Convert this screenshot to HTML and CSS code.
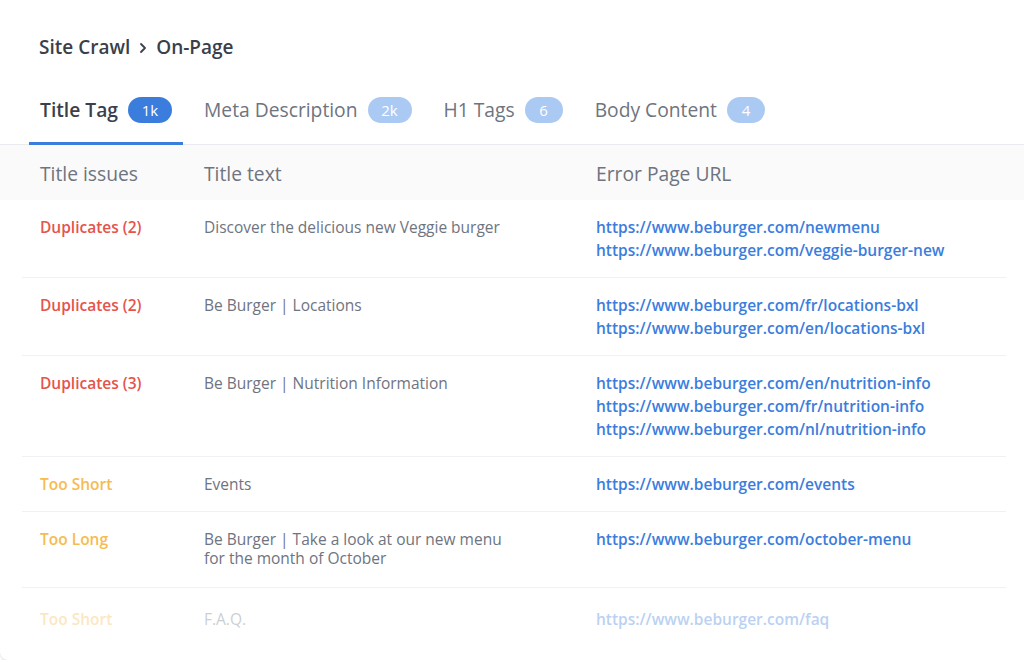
FILE: index.html
```html
<!DOCTYPE html>
<html lang="en">

<head>
  <meta charset="UTF-8" />
  <meta name="viewport" content="width=device-width, initial-scale=1.0" />
  <title>Site Crawl - On-Page</title>
  <link rel="stylesheet" href="styles.css">
</head>

<body>

  <div class="card">
    <div class="crumbs">
      <span>Site Crawl</span>
      <svg class="chevron" width="10" height="12" viewBox="0 0 10 12">
        <path d="M3 2l4 4-4 4" fill="none" stroke="#3a3f4b" stroke-width="1.8" stroke-linecap="round" stroke-linejoin="round" />
      </svg>
      <span>On-Page</span>
    </div>

    <nav class="tabs">
      <a class="tab active" href="#">Title Tag <span class="badge">1k</span></a>
      <a class="tab" href="#">Meta Description <span class="badge">2k</span></a>
      <a class="tab" href="#">H1 Tags <span class="badge sm">6</span></a>
      <a class="tab" href="#">Body Content <span class="badge sm">4</span></a>
    </nav>

    <div class="table">
      <div class="head">
        <div class="row">
          <div>Title issues</div>
          <div>Title text</div>
          <div>Error Page URL</div>
        </div>
      </div>

      <div class="row">
        <div class="issue dup">Duplicates (2)</div>
        <div class="text">Discover the delicious new Veggie burger</div>
        <div class="urls">
          <a href="#">https://www.beburger.com/newmenu</a>
          <a href="#">https://www.beburger.com/veggie-burger-new</a>
        </div>
      </div>

      <div class="row">
        <div class="issue dup">Duplicates (2)</div>
        <div class="text">Be Burger | Locations</div>
        <div class="urls">
          <a href="#">https://www.beburger.com/fr/locations-bxl</a>
          <a href="#">https://www.beburger.com/en/locations-bxl</a>
        </div>
      </div>

      <div class="row">
        <div class="issue dup">Duplicates (3)</div>
        <div class="text">Be Burger | Nutrition Information</div>
        <div class="urls">
          <a href="#">https://www.beburger.com/en/nutrition-info</a>
          <a href="#">https://www.beburger.com/fr/nutrition-info</a>
          <a href="#">https://www.beburger.com/nl/nutrition-info</a>
        </div>
      </div>

      <div class="row">
        <div class="issue warn">Too Short</div>
        <div class="text">Events</div>
        <div class="urls">
          <a href="#">https://www.beburger.com/events</a>
        </div>
      </div>

      <div class="row tall">
        <div class="issue warn">Too Long</div>
        <div class="text wrap">Be Burger | Take a look at our new menu for the month of October</div>
        <div class="urls">
          <a href="#">https://www.beburger.com/october-menu</a>
        </div>
      </div>

      <div class="row faded">
        <div class="issue warn">Too Short</div>
        <div class="text">F.A.Q.</div>
        <div class="urls">
          <a href="#">https://www.beburger.com/faq</a>
        </div>
      </div>
    </div>
  </div>

</body>

</html>
```

FILE: styles.css
```css
body {
  margin: 0;
  padding: 0;
  background: #ffffff;
  font-family: "Open Sans", "Noto Sans", Arial, sans-serif;
  overflow: hidden;
}

.card {
  width: 1060px;
  height: 660px;
  background: #ffffff;
  border-radius: 0 0 0 8px;
  box-shadow: 0 1px 2px rgba(0, 0, 0, 0.14);
  overflow: hidden;
}

/* breadcrumb */
.crumbs {
  display: flex;
  align-items: center;
  gap: 8px;
  padding: 34px 0 0 39px;
  line-height: 26px;
  font-size: 19px;
  font-weight: 600;
  color: #3a3f4b;
}

.chevron {
  margin-top: 1px;
}

/* tabs */
.tabs {
  display: flex;
  gap: 10px;
  margin-top: 37px;
  padding-left: 29px;
  border-bottom: 1px solid #e9ebee;
}

.tab {
  display: flex;
  align-items: center;
  gap: 10px;
  padding: 0 11px 19px;
  margin-bottom: -1px;
  line-height: 26px;
  font-size: 19.25px;
  color: #6e7480;
  text-decoration: none;
  border-bottom: 3px solid transparent;
}

.tab.active {
  color: #3a3f4b;
  font-weight: 600;
  border-bottom-color: #3b7ddd;
}

.badge {
  display: inline-block;
  min-width: 44px;
  height: 26px;
  padding: 0 3px;
  box-sizing: border-box;
  border-radius: 13px;
  background: #abcaf3;
  color: #ffffff;
  font-size: 15px;
  font-weight: 400;
  line-height: 26px;
  text-align: center;
}

.badge.sm {
  min-width: 38px;
}

.tab.active .badge {
  background: #3b7ddd;
}

/* table */
.head {
  background: #fafafa;
}

.row {
  display: grid;
  grid-template-columns: 164px 392px 1fr;
  width: 966px;
  margin-left: 22px;
  padding: 16px 0 15px 18px;
  border-bottom: 1px solid #f0f1f4;
  font-size: 15.5px;
  line-height: 23px;
}

.head .row {
  padding: 16px 0 13px 18px;
  border-bottom: none;
  font-size: 19.25px;
  line-height: 26px;
  color: #6e7480;
}

.issue {
  font-weight: 600;
}

.dup {
  color: #e5534b;
}

.warn {
  color: #f6bb51;
}

.text {
  color: #6e7480;
}

.text.wrap {
  width: 305px;
  line-height: 19px;
  padding-top: 2px;
}

.urls a {
  display: block;
  color: #3b7ddd;
  font-weight: 600;
  text-decoration: none;
}

.row.tall {
  padding-bottom: 19px;
}

.row.faded {
  padding-top: 20px;
  border-bottom: none;
  opacity: 0.35;
}
```
